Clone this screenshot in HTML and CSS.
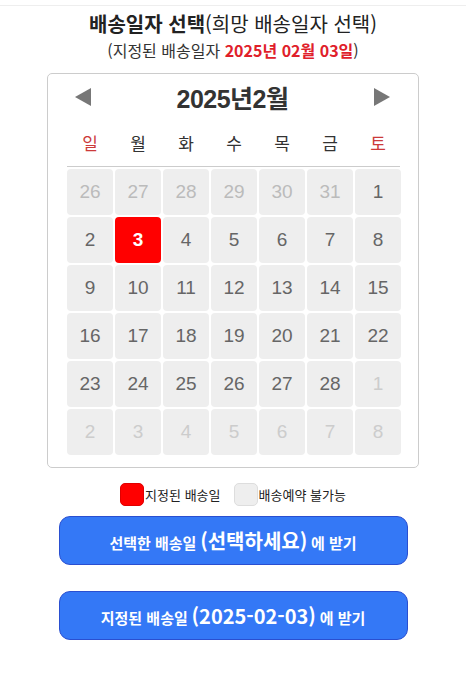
FILE: index.html
```html
<!DOCTYPE html>
<html lang="ko">
<head>
  <meta charset="UTF-8" />
  <meta name="viewport" content="width=device-width, initial-scale=1.0" />
  <title>배송일자 선택</title>
  <link rel="stylesheet" href="styles.css">
</head>
<body>
  <div class="topline"></div>

  <h1 class="title"><strong>배송일자 선택</strong>(희망 배송일자 선택)</h1>
  <p class="subtitle">(지정된 배송일자 <span class="fixed-date">2025년 02월 03일</span>)</p>

  <div class="calendar">
    <div class="cal-header">
      <span class="arrow">
        <svg width="16" height="18" viewBox="0 0 16 18"><polygon points="16,0 16,18 0,9" fill="#777"/></svg>
      </span>
      <span class="cal-title">2025년2월</span>
      <span class="arrow">
        <svg width="16" height="18" viewBox="0 0 16 18"><polygon points="0,0 0,18 16,9" fill="#777"/></svg>
      </span>
    </div>
    <div class="weekdays">
      <span class="sun">일</span><span>월</span><span>화</span><span>수</span><span>목</span><span>금</span><span class="sat">토</span>
    </div>
    <div class="days" id="days"></div>
  </div>

  <div class="legend">
    <span class="legend-box red"></span><span class="legend-text">지정된 배송일</span>
    <span class="legend-box gray"></span><span class="legend-text">배송예약 불가능</span>
  </div>

  <button class="btn"><span class="small">선택한 배송일</span> <span class="big">(선택하세요)</span> <span class="small">에 받기</span></button>
  <button class="btn"><span class="small">지정된 배송일</span> <span class="big">(2025-02-03)</span> <span class="small">에 받기</span></button>

  <script>
    const days = document.getElementById("days");
    const cells = [];
    [26, 27, 28, 29, 30, 31].forEach(d => cells.push({ d, cls: "prev" }));
    for (let d = 1; d <= 28; d++) cells.push({ d, cls: d === 3 ? "selected" : "" });
    for (let d = 1; d <= 8; d++) cells.push({ d, cls: "next" });
    cells.forEach(c => {
      const div = document.createElement("div");
      div.className = `day ${c.cls}`;
      div.textContent = c.d;
      days.appendChild(div);
    });
  </script>
</body>
</html>
```

FILE: styles.css
```css
body {
  margin: 0;
  font-family: "Noto Sans CJK KR", sans-serif;
  color: #222;
  background: #fff;
}

.topline {
  height: 5px;
  border-bottom: 1px solid #eee;
}

.title {
  margin: 4px 0 0;
  text-align: center;
  font-size: 20px;
  font-weight: 400;
  line-height: 28px;
  color: #222;
}

.title strong {
  font-weight: 700;
}

.subtitle {
  margin: 1px 0 0;
  text-align: center;
  font-size: 16px;
  line-height: 22px;
  color: #333;
}

.fixed-date {
  color: #e0202a;
  font-weight: 700;
}

.calendar {
  width: 372px;
  margin: 12px auto 0;
  border: 1px solid #ccc;
  border-radius: 5px;
  padding: 4px 18px 12px 19px;
  box-sizing: border-box;
}

.cal-header {
  height: 38px;
  display: flex;
  align-items: center;
  justify-content: space-between;
  padding: 0 10px 0 8px;
}

.arrow {
  display: flex;
}

.cal-title {
  font-size: 25px;
  font-weight: 700;
  color: #333;
  font-family: "Liberation Sans", "Noto Sans CJK KR", sans-serif;
  letter-spacing: -0.5px;
}

.weekdays {
  display: grid;
  grid-template-columns: repeat(7, 46px);
  column-gap: 2px;
  margin-top: 12px;
  padding-bottom: 8px;
  border-bottom: 1px solid #ccc;
  line-height: 30px;
  height: 30px;
  font-size: 17px;
  text-align: center;
  color: #333;
}

.weekdays .sun,
.weekdays .sat {
  color: #cc3a3a;
}

.days {
  display: grid;
  grid-template-columns: repeat(7, 46px);
  grid-auto-rows: 46px;
  gap: 2px;
  margin-top: 2px;
}

.day {
  background: #eee;
  border-radius: 4px;
  display: flex;
  align-items: center;
  justify-content: center;
  font-family: "Liberation Sans", sans-serif;
  font-size: 19px;
  color: #666;
}

.day.prev {
  color: #bbb;
}

.day.next {
  color: #ccc;
}

.day.selected {
  background: #ff0000;
  color: #fff;
  font-weight: 700;
}

.legend {
  display: flex;
  justify-content: center;
  align-items: center;
  margin-top: 14px;
  height: 24px;
  font-size: 13px;
  color: #222;
}

.legend-box {
  width: 24px;
  height: 23px;
  border-radius: 5px;
  box-sizing: border-box;
  margin-right: 1px;
}

.legend-box.red {
  background: #ff0000;
  border: 1px solid #e00000;
}

.legend-box.gray {
  background: #eee;
  border: 1px solid #ddd;
  margin-left: 13px;
}

.btn {
  display: block;
  width: 349px;
  height: 49px;
  margin: 10px auto 0;
  padding: 0;
  background: #3478f6;
  border: 1px solid #2a4fd0;
  border-radius: 11px;
  color: #fff;
  font-family: "Noto Sans CJK KR", sans-serif;
  font-weight: 600;
  cursor: pointer;
}

.btn + .btn {
  margin-top: 26px;
}

.btn .small {
  font-size: 15px;
}

.btn .big {
  font-size: 20px;
}
```
